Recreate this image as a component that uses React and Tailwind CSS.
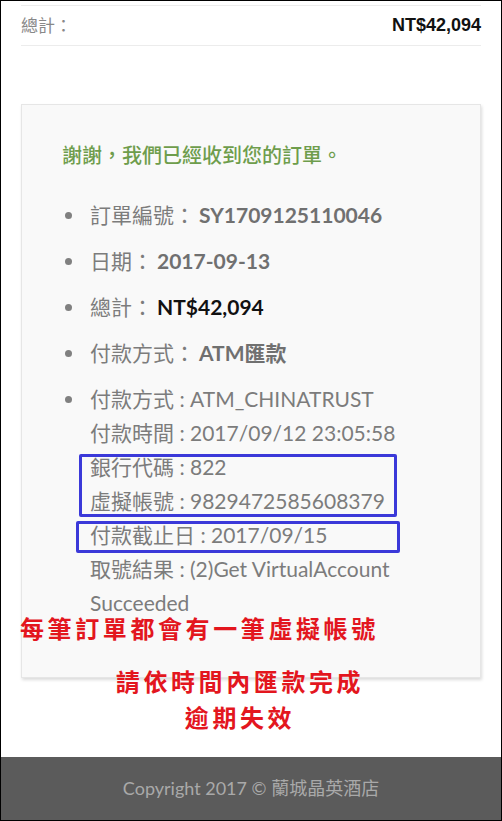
const items = [
  { label: "訂單編號：", value: "SY1709125110046" },
  { label: "日期：", value: "2017-09-13" },
  { label: "總計：", value: "NT$42,094", dark: true },
  { label: "付款方式：", value: "ATM匯款" },
];

const details = [
  "付款時間 : 2017/09/12 23:05:58",
  "銀行代碼 : 822",
  "虛擬帳號 : 9829472585608379",
  "付款截止日 : 2017/09/15",
  "取號結果 : (2)Get VirtualAccount Succeeded",
];

export default function App() {
  return (
    <div className="relative flex h-[821px] w-[502px] flex-col overflow-hidden border border-black bg-white font-['Lato','Noto_Sans_CJK_TC',sans-serif]">
      {/* order total row */}
      <div className="mx-[20px] mt-[4px] flex h-[41px] items-center justify-between border-y border-[#ececec]">
        <span className="text-[17px] text-[#888]">總計：</span>
        <span className="font-['Liberation_Sans',sans-serif] text-[18px] font-bold text-[#111]">
          NT$42,094
        </span>
      </div>

      {/* thank you card */}
      <div className="mx-[20px] mt-[58px] border border-[#e6e6e6] bg-[#f9f9f9] pb-[57px] pl-[40px] pr-[36px] pt-[36px] shadow-[1px_2px_3px_rgba(0,0,0,0.14)]">
        <p className="text-[20px] font-medium leading-[28px] text-[#6e9d4c]">
          謝謝，我們已經收到您的訂單。
        </p>
        <ul className="mt-[29px] text-[21px] leading-[34px] text-[#7c7c7c]">
          {items.map((item) => (
            <li key={item.label} className="mb-[12px] flex">
              <Bullet />
              <span>
                {item.label}
                <span className={item.dark ? "ml-[4px] font-bold text-[#111]" : "ml-[4px] font-bold text-[#707070]"}>
                  {item.value}
                </span>
              </span>
            </li>
          ))}
          <li className="flex">
            <Bullet />
            <div>
              <p>付款方式 : ATM_CHINATRUST</p>
              {details.map((line) => (
                <p key={line}>{line}</p>
              ))}
            </div>
          </li>
        </ul>
      </div>

      <footer className="mt-auto flex h-[63px] items-center justify-center bg-[#5b5b5b] text-[18px] text-[#a9a9a9]">
        Copyright 2017 © 蘭城晶英酒店
      </footer>

      {/* annotations */}
      <div className="absolute left-[78px] top-[453px] h-[63px] w-[318px] rounded-[2px] border-[3px] border-[#3b39d9]" />
      <div className="absolute left-[75px] top-[520px] h-[32px] w-[324px] rounded-[2px] border-[3px] border-[#3b39d9]" />
      <p className="absolute left-[19px] top-[614px] font-['Noto_Sans_CJK_TC',sans-serif] text-[24px] font-bold leading-[26px] tracking-[3.6px] text-[#e3161e]">
        每筆訂單都會有一筆虛擬帳號
      </p>
      <div className="absolute left-[100px] top-[662px] flex w-[278px] flex-col items-center font-['Noto_Sans_CJK_TC',sans-serif] text-[24px] font-bold leading-[36px] tracking-[3.6px] text-[#e3161e]">
        <span>請依時間內匯款完成</span>
        <span>逾期失效</span>
      </div>
    </div>
  );
}

function Bullet() {
  return (
    <span className="flex h-[34px] w-[28px] shrink-0 items-center">
      <span className="ml-[3px] h-[7px] w-[7px] rounded-full bg-[#808080]" />
    </span>
  );
}
